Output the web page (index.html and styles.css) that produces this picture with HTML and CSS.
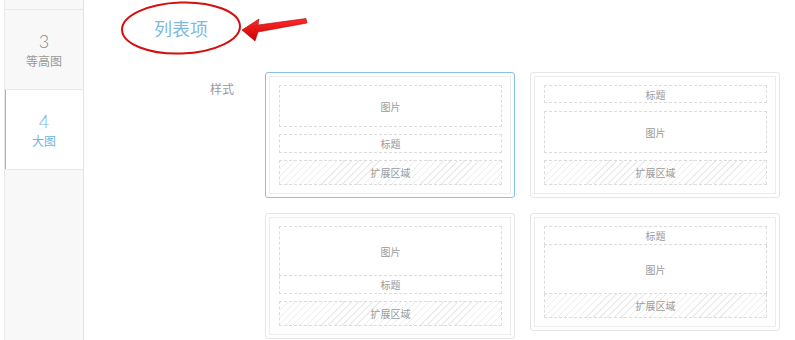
FILE: index.html
```html
<!DOCTYPE html>
<html>
<head>
  <meta charset="utf-8">
  <link rel="stylesheet" href="styles.css">
</head>
<body>
  <div class="page">
    <div class="sidebar">
      <div class="tab tab-cut"></div>
      <div class="tab">
        <span class="tab-num">3</span>
        <span class="tab-label">等高图</span>
      </div>
      <div class="tab tab-active">
        <span class="tab-num">4</span>
        <span class="tab-label">大图</span>
      </div>
    </div>

    <div class="main">
      <h2 class="title">列表项</h2>

      <div class="form-row">
        <div class="form-label">样式</div>
        <div class="styles">
          <!-- 样式 1：图片 / 标题 / 扩展 -->
          <div class="card card-selected">
            <div class="card-inner">
              <div class="slot slot-img">图片</div>
              <div class="slot slot-title">标题</div>
              <div class="slot slot-ext">扩展区域</div>
            </div>
          </div>
          <!-- 样式 2：标题 / 图片 / 扩展 -->
          <div class="card">
            <div class="card-inner">
              <div class="slot slot-title slot-title-top">标题</div>
              <div class="slot slot-img slot-img-mid">图片</div>
              <div class="slot slot-ext">扩展区域</div>
            </div>
          </div>
          <!-- 样式 3：图片 + 标题 合并 -->
          <div class="card">
            <div class="card-inner">
              <div class="slot-group">
                <div class="slot slot-img slot-img-tall">图片</div>
                <div class="slot slot-title slot-joined">标题</div>
              </div>
              <div class="slot slot-ext">扩展区域</div>
            </div>
          </div>
          <!-- 样式 4：全部合并 -->
          <div class="card">
            <div class="card-inner">
              <div class="slot-group">
                <div class="slot slot-title">标题</div>
                <div class="slot slot-img slot-img-tall slot-joined">图片</div>
                <div class="slot slot-ext slot-joined">扩展区域</div>
              </div>
            </div>
          </div>
        </div>
      </div>
    </div>
  </div>

  <!-- 标注：红色圈 + 箭头 -->
  <svg class="annot" width="320" height="60" viewBox="0 0 320 60">
    <defs>
      <linearGradient id="arrowFill" x1="0" y1="0" x2="0" y2="1">
        <stop offset="0" stop-color="#ff2a2a"/>
        <stop offset="1" stop-color="#c80000"/>
      </linearGradient>
    </defs>
    <ellipse cx="181" cy="28" rx="59" ry="25.5" fill="none" stroke="#d30f0f" stroke-width="2" transform="rotate(-2 181 28)"/>
    <polygon points="242,30 259,19 258,25 306,18.5 307,23 258,32 255,41" fill="url(#arrowFill)" stroke="#b00000" stroke-width="0.6"/>
  </svg>
</body>
</html>
```

FILE: styles.css
```css
body {
  margin: 0;
  background: #fff;
  font-family: "Noto Sans CJK SC", "Noto Sans", sans-serif;
  position: relative;
}
.page {
  display: flex;
  height: 340px;
  overflow: hidden;
}

/* 左侧竖向选项卡 */
.sidebar {
  margin-left: 4px;
  width: 78px;
  flex: none;
  background: #f8f8f8;
  border-left: 1px solid #e8e8e8;
  border-right: 1px solid #e4e4e4;
}
.tab {
  height: 80px;
  box-sizing: border-box;
  border-bottom: 1px solid #e8e8e8;
  display: flex;
  flex-direction: column;
  align-items: center;
  justify-content: center;
  padding-top: 2px;
}
.tab-cut {
  margin-top: -70px;
}
.tab-num {
  font-family: Lato, "Liberation Sans", sans-serif;
  font-size: 18px;
  line-height: 20px;
  color: #8a8a8a;
  font-weight: 300;
}
.tab-label {
  font-size: 12px;
  line-height: 20px;
  color: #999;
}
.tab-active {
  background: #fff;
  box-shadow: inset 1px 0 0 #7dbfe2;
}
.tab-active .tab-num,
.tab-active .tab-label {
  color: #6cb6df;
}

/* 右侧内容 */
.main {
  flex: 1;
}
.title {
  margin: 0;
  padding-left: 70px;
  height: 56px;
  line-height: 56px;
  font-size: 18px;
  font-weight: normal;
  color: #7cbbe0;
}
.form-row {
  display: flex;
  margin-top: 16px;
}
.form-label {
  width: 150px;
  padding-right: 31px;
  padding-top: 8px;
  text-align: right;
  font-size: 12px;
  line-height: 18px;
  color: #999;
}
.styles {
  display: grid;
  grid-template-columns: 250px 250px;
  column-gap: 15px;
  row-gap: 15px;
  align-items: start;
}

/* 样式卡片 */
.card {
  border: 1px solid #e6e6e6;
  border-radius: 3px;
  padding: 3px;
}
.card-selected {
  border-color: #86c2e2;
}
.card-inner {
  border: 1px solid #ececec;
  padding: 8px 8px 8px 9px;
  display: flex;
  flex-direction: column;
  gap: 7px;
}
.slot {
  border: 1px dashed #dcdcdc;
  display: flex;
  align-items: center;
  justify-content: center;
  font-size: 10px;
  color: #9a9a9a;
}
.slot-img {
  height: 40px;
}
.slot-title {
  height: 17px;
}
.slot-title-top {
  height: 16px;
}
.slot-img-mid {
  margin-top: 1px;
}
.slot-ext {
  height: 23px;
  background: repeating-linear-gradient(135deg, #ececec 0 1px, transparent 1px 5px);
}
.slot-group {
  display: flex;
  flex-direction: column;
}
.slot-img-tall {
  height: 48px;
}
.slot-joined {
  border-top: none;
}

/* 标注层 */
.annot {
  position: absolute;
  left: 0;
  top: 0;
}
```
